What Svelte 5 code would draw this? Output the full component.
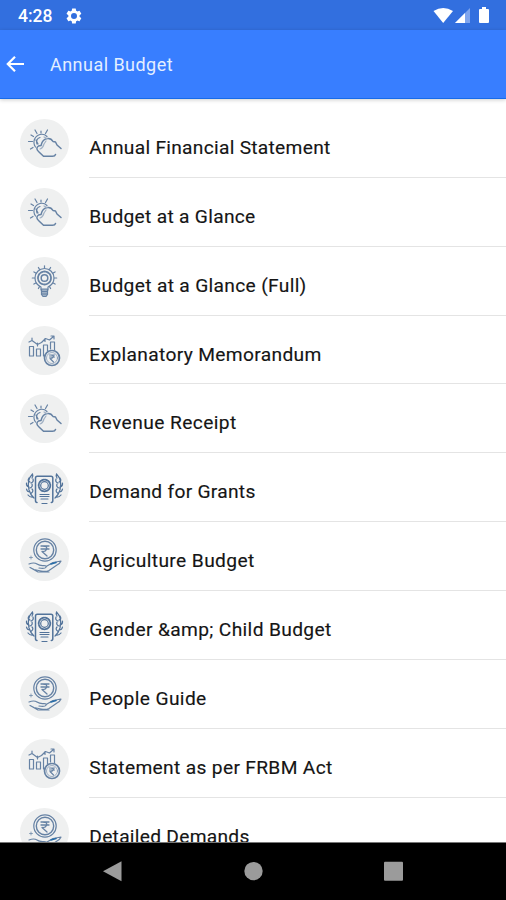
<script>
  const items = [
    { icon: 'weather', title: 'Annual Financial Statement', width: 241 },
    { icon: 'weather', title: 'Budget at a Glance', width: 166 },
    { icon: 'bulb', title: 'Budget at a Glance (Full)', width: 217 },
    { icon: 'chart', title: 'Explanatory Memorandum', width: 232 },
    { icon: 'weather', title: 'Revenue Receipt', width: 147 },
    { icon: 'award', title: 'Demand for Grants', width: 166 },
    { icon: 'hand', title: 'Agriculture Budget', width: 165 },
    { icon: 'award', title: 'Gender &amp; Child Budget', width: 242 },
    { icon: 'hand', title: 'People Guide', width: 117 },
    { icon: 'chart', title: 'Statement as per FRBM Act', width: 243 },
    { icon: 'hand', title: 'Detailed Demands', width: 160 }
  ];
  const rays = [0, 30, 60, 90, 120, 150, 210, 240, 270, 300, 330];
</script>

<div class="screen">
  <div class="status">
    <span class="time">4:28</span>
    <svg class="gear" width="18" height="18" viewBox="0 0 24 24"><path fill="#fff" fill-rule="evenodd" d="M19.4 13a7.8 7.8 0 0 0 0-2l2.1-1.7a.5.5 0 0 0 .1-.6l-2-3.5a.5.5 0 0 0-.6-.2l-2.5 1a7.300 7.300 0 0 0-1.700-1L14.400 2.400a.5.5 0 0 0-.5-.4h-4a.5.5 0 0 0-.5.4L9 5a7.700 7.700 0 0 0-1.700 1l-2.500-1a.5.5 0 0 0-.6.2l-2 3.500a.5.5 0 0 0 .1.6L4.500 11a8 8 0 0 0 0 2l-2.200 1.700a.5.5 0 0 0-.1.6l2 3.500c.1.2.4.3.6.2l2.500-1c.5.4 1.100.8 1.700 1l.4 2.600c0 .2.2.4.5.4h4c.3 0 .5-.2.5-.4l.4-2.600a7.300 7.300 0 0 0 1.700-1l2.500 1c.2.1.5 0 .6-.2l2-3.500a.5.500 0 0 0-.1-.6zM12 16a4 4 0 1 1 0-8 4 4 0 0 1 0 8z"/></svg>
    <svg class="signals" width="60" height="20" viewBox="0 0 60 20">
      <path fill="#fff" d="M.5 5Q10.200-1 20 5L10.200 17Z"/>
      <path fill="#7fa5ee" d="M37 2V17H22Z"/>
      <path fill="#fff" d="M32 7V17H22Z"/>
      <path fill="#fff" d="M47 3h2V1h4v2h2q1 0 1 1v12q0 1-1 1h-8q-1 0-1-1V4q0-1 1-1z"/>
    </svg>
  </div>
  <header>
    <svg width="20" height="18" viewBox="0 0 20 18" fill="none" stroke="#fff" stroke-width="2.200"><path d="M19 9H3M10 1.800 2.800 9 10 16.200"/></svg>
    <h1>Annual Budget</h1>
  </header>
  <main>
    {#each items as item}
      <div class="row">
        <div class="avatar">
          <svg width="49" height="49" viewBox="0 0 49 49" fill="none" stroke="#6682a4" stroke-width="1.200" stroke-linecap="round" stroke-linejoin="round">
            {#if item.icon === 'weather'}
              <path d="M15.500 28A8 8 0 0 1 20 15.500Q24 14.500 27 17.500M17 25Q15.500 20 20 18.500M16 21l2 4M8.500 22.500h4M11 16l2.500 1.500M15 11l2 3.500M21 12v2M27.500 11l-2 3.500M10.500 30l2.500-1.500"/>
              <path stroke-width="1.500" d="M35.500 35.500Q35 37.300 32.500 37.300H23.500L19 33Q15 29.500 18.500 27L21 26.500Q22.500 20 27.500 19.500Q31 19 33 22.500L35.500 23L37 26L41 29.500"/>
              <path stroke="#a2b2c5" d="M20 30Q23 29 24 25L26 22M24 18l3 1.500"/>
            {:else if item.icon === 'bulb'}
              <path d="M21 33v-3Q15 27 15 21a9.500 9.500 0 0 1 19 0Q34 27 28 30v3z"/>
              <circle cx="24.500" cy="21" r="6.500" stroke-width="1.800" stroke-dasharray="2.200 1"/>
              <circle cx="24.500" cy="21" r="3.300" stroke-width="1.500"/>
              {#each rays as angle}
                <path d="M24.500 11V8.800" transform="rotate({angle} 24.500 21)"/>
              {/each}
              <path fill="#9eb0c5" d="M21.500 32h6v5.500l-1.500 2h-3l-1.500-2z"/>
              <path d="M21.500 34.500h6M21.500 37h6"/>
            {:else if item.icon === 'chart'}
              <path d="M9.500 20.500h4v9.500h-4zM16.500 23h4v7h-4zM23.500 30v-11h4v6M30.500 23V16h4v8"/>
              <path d="M9 16l3-1.500 5.500 4 4-2 4-4 4 1.500 4-3.500M12 14v-2M31 10h3v3M25 12.500v3M17.500 17v3"/>
              <circle cx="32" cy="32" r="7.500" stroke-width="1.700"/>
              <circle cx="32" cy="32" r="5.500" stroke-width=".6"/>
              <path d="M29.500 29h5M29.500 31h5M30.500 29q4 0 2.500 2.500-.7 1-3 1l3.500 3.500"/>
            {:else if item.icon === 'award'}
              <g stroke="#52739a">
                <path stroke-width="1.500" d="M17 39.500q-1.500 0-1.500-2V15q0-1.800 1.800-1.800H31q1.800 0 1.800 1.800v22.500q0 2-1.500 2"/>
                <circle cx="24.500" cy="22.500" r="5.800" stroke-dasharray="2.300 1.100" stroke-width="1.800"/>
                <circle cx="24.500" cy="22.500" r="3.800"/>
                <path d="M20 31.500h9M20 33.500h9M21 36h7M22 40.500h5"/>
                <path d="M12.500 11Q6.500 17 9 27 10.500 32 14 35M12 15q1.500-2 .5-4M10 19q-3-1-1-4M11 20q3-1 2-4M9 24q-3-1-2.500-4M10 25q3-1 2-4M10 29q-3 0-3.500-3M11.500 30q2.500-2 .5-4M13 34q-3 .5-5-2"/>
                <path d="M36.500 11Q42.500 17 40 27 38.500 32 35 35M37 15q-1.500-2-.5-4M39 19q3-1 1-4M38 20q-3-1-2-4M40 24q3-1 2.500-4M39 25q-3-1-2-4M39 29q3 0 3.500-3M37.500 30q-2.500-2-.5-4M36 34q3 .5 5-2"/>
              </g>
            {:else}
              <circle cx="25" cy="18" r="11.200"/>
              <circle cx="25" cy="18" r="8.700" stroke-width="1.400"/>
              <path stroke-width="1.300" d="M21 14h8M21 17h8M22.500 14q5.500 0 4 3.500-1 2.500-4.500 2l5 4.500"/>
              <path d="M9 32q5-2 8 0t7 1.500q3 0 2 1.700-1 1.800-7 .8M27 34l6-3.500 8-1.500q-1 2.500-4 4l-8 5.500q-3 1.500-8 .5l-7-1.500-4-2M11 36l7 4h11"/>
              <path d="M11 24v3M9.500 25.500h3" stroke-width=".7"/>
              <path stroke="#286da8" stroke-width="1.600" d="M31 32l5-1.500"/>
            {/if}
          </svg>
        </div>
        <div class="label">
          <svg class="title" width="350" height="30"><text x="0.300" y="21" textLength={item.width}>{item.title}</text></svg>
        </div>
      </div>
    {/each}
  </main>
  <nav>
    <svg width="20" height="22" viewBox="0 0 20 22"><path fill="#9b9b9b" d="M18.500.3V20.300L0 10.300Z"/></svg>
    <svg width="20" height="22" viewBox="0 0 20 22"><circle cx="9.500" cy="10.100" r="9.200" fill="#9b9b9b"/></svg>
    <svg width="20" height="22" viewBox="0 0 20 22"><rect x="0" y=".7" width="19" height="19" rx="1" fill="#9b9b9b"/></svg>
  </nav>
</div>

<style>
  .screen {
    width: 506px;
    height: 900px;
    overflow: hidden;
    display: flex;
    flex-direction: column;
    background: #fff;
    font-family: Roboto, sans-serif;
  }
  .status {
    height: 30px;
    flex: none;
    box-sizing: border-box;
    background: #326fdf;
    display: flex;
    align-items: center;
    padding: 2px 13px 0 18px;
  }
  .time { width: 47px; color: #fff; font-size: 17.500px; font-weight: 500; line-height: 28px; }
  .signals { margin-left: auto; }
  header {
    height: 69px;
    flex: none;
    box-sizing: border-box;
    background: #387eff;
    border-bottom: 1px solid #176be9;
    box-shadow: 0 1px 4px #0003;
    display: flex;
    align-items: center;
    padding-left: 5px;
    z-index: 1;
  }
  h1 { margin: 1px 0 0 25px; color: #e3efff; font-size: 18px; font-weight: 400; letter-spacing: .46px; line-height: 24px; }
  main { flex: 1; min-height: 0; overflow: hidden; padding-top: 9.900px; }
  .row { height: 68.900px; display: flex; align-items: center; padding-left: 20px; }
  .avatar { width: 49px; height: 49px; border-radius: 50%; background: #eff0f0; flex: none; }
  .avatar svg { display: block; }
  .label {
    margin-left: 20px;
    height: 68.900px;
    flex: 1;
    box-sizing: border-box;
    border-bottom: 1.500px solid #e4e4e4;
    display: flex;
    align-items: center;
    padding-top: 10px;
  }
  .title { display: block; overflow: visible; }
  .title text { fill: #151515; font-size: 19.200px; font-weight: 400; stroke: #151515; stroke-width: .15px; }
  nav {
    height: 58px;
    flex: none;
    box-sizing: border-box;
    background: #000;
    border-top: 1px solid #777;
    display: flex;
    justify-content: space-between;
    align-items: center;
    padding: 0 102px 0 103px;
  }
</style>
